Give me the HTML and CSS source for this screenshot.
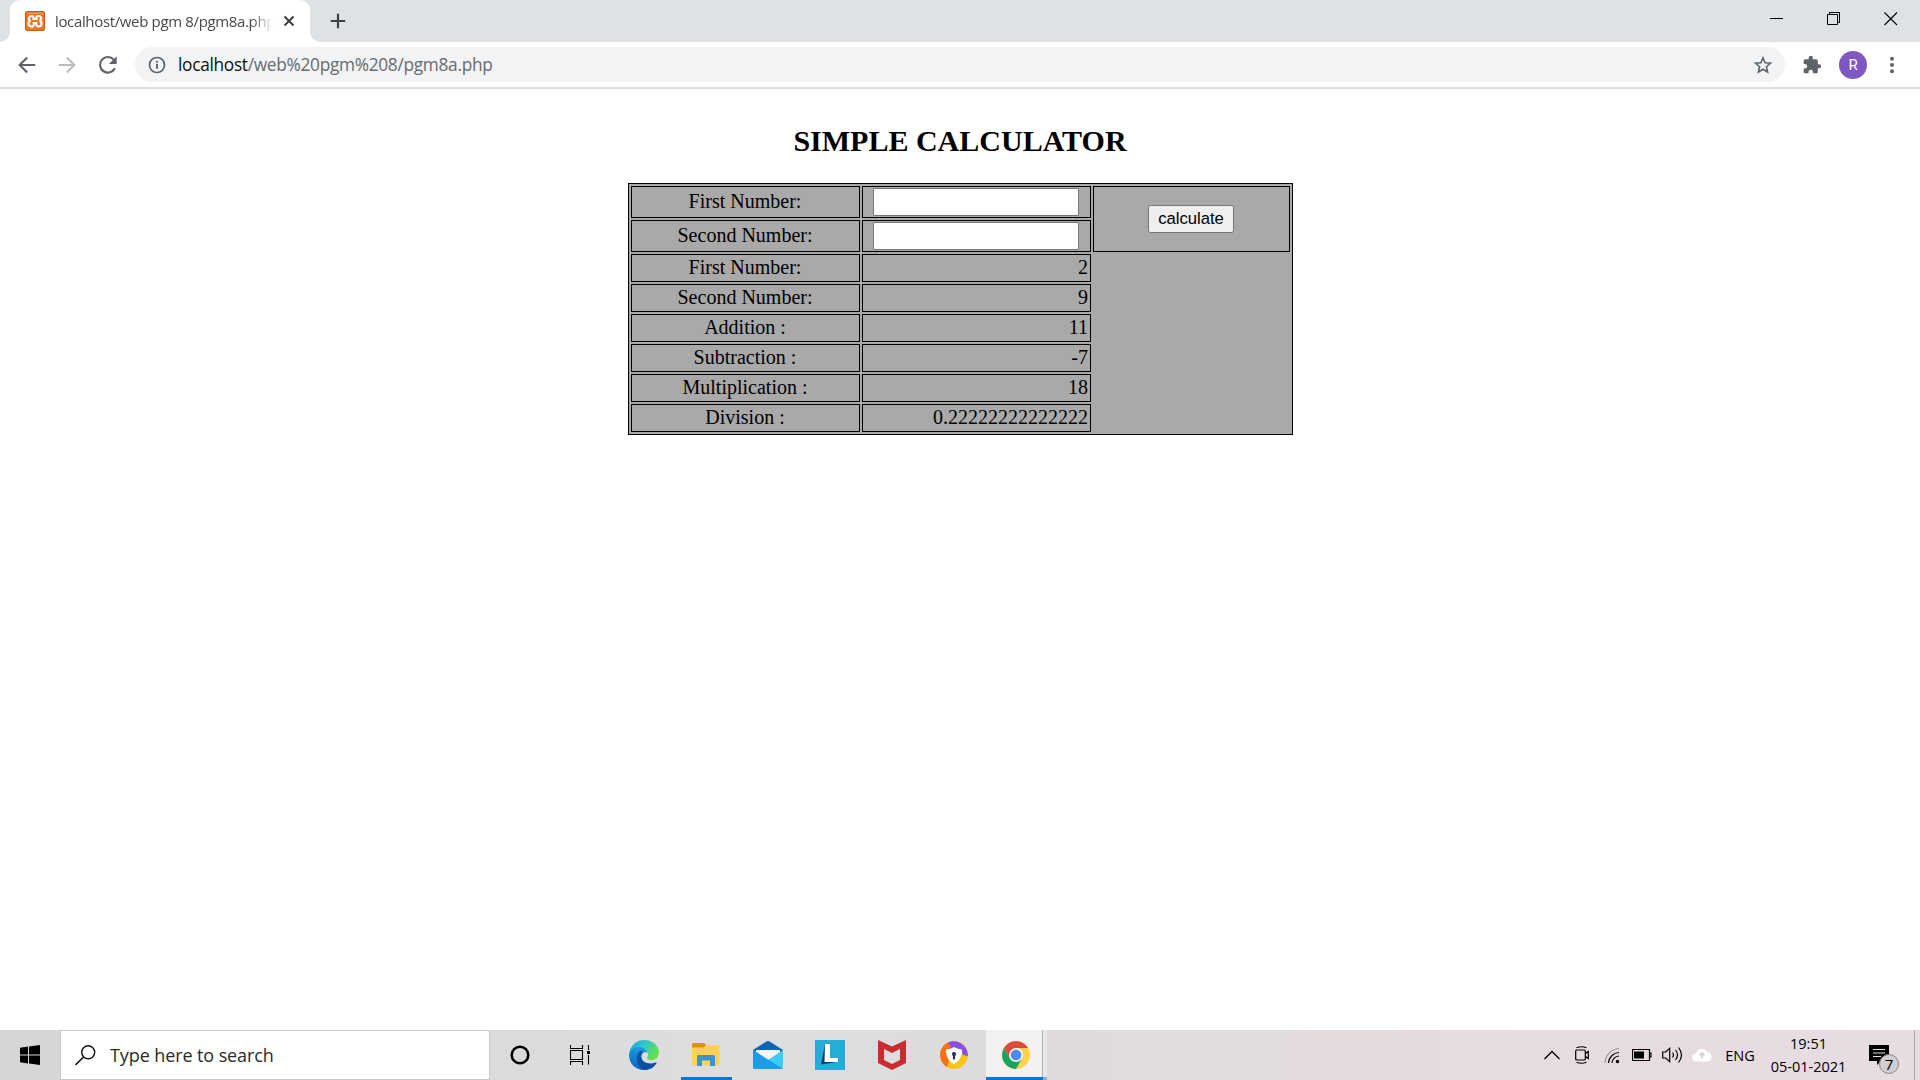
FILE: index.html
```html
<!DOCTYPE html>
<html lang="en">
<head>
<meta charset="utf-8">
<title>localhost/web pgm 8/pgm8a.php</title>
<link rel="stylesheet" href="styles.css">
</head>
<body>
<header class="tabstrip">
  <div class="tab">
    <svg class="favicon" viewBox="0 0 20 20"><rect x=".5" y=".5" width="19" height="19" rx="1.5" fill="#f37623" stroke="#c85a13"/><path d="M2 1.500h16V3H2z" fill="#d39a70"/><path d="M8.500 7Q8.500 5 6.500 5T4 7.300 5.500 10Q3.500 10.500 3.500 12.800T6.200 15.500 8.800 12.800V12H11.200V12.800Q11.200 15.500 13.800 15.500T16.500 12.800 14.500 10Q16 9.500 16 7.300T13.500 5 11.500 7V8H8.500z" fill="none" stroke="#fff" stroke-width="2.200"/></svg>
    <span class="tab-title">localhost/web pgm 8/pgm8a.php</span>
    <svg class="tab-close" viewBox="0 0 12 12"><path d="M1.500 1.500l9 9M10.500 1.500l-9 9" stroke="#3c4043" stroke-width="2"/></svg>
  </div>
  <svg class="new-tab" viewBox="0 0 16 16"><path d="M8 .8v14.400M.8 8h14.400" stroke="#3c4043" stroke-width="2.200"/></svg>
  <div class="window-buttons">
    <span><svg width="14" height="14" viewBox="0 0 14 14"><path d="M0 6.500h13" stroke="#000"/></svg></span>
    <span><svg width="14" height="14" viewBox="0 0 14 14"><path d="M.5 2.500h10v10H.5zM2.500 2V.5h10v10h-2" fill="none" stroke="#000"/></svg></span>
    <span><svg width="14" height="14" viewBox="0 0 14 14"><path d="M.5 .5l12.500 12.500M13 .5L.5 13" stroke="#000" stroke-width="1.100"/></svg></span>
  </div>
</header>
<nav class="toolbar">
  <svg class="nav-icon" viewBox="0 0 24 24"><path d="M21 12H4.500M12.200 3.800L4 12l8.200 8.200" fill="none" stroke="#5f6368" stroke-width="2.300"/></svg>
  <svg class="nav-icon" viewBox="0 0 24 24"><path d="M3 12h16.500M11.800 3.800L20 12l-8.200 8.200" fill="none" stroke="#babcbe" stroke-width="2.300"/></svg>
  <svg class="nav-icon reload" viewBox="0 0 24 24"><path d="M19.500 15.500A8.500 8.500 0 1 1 18.300 6.200" fill="none" stroke="#5f6368" stroke-width="2.400"/><path d="M21.500 2.500v8.500H13z" fill="#5f6368"/></svg>
  <div class="omnibox">
    <svg class="info" viewBox="0 0 18 18"><circle cx="9" cy="9" r="7.500" fill="none" stroke="#5f6368" stroke-width="1.700"/><path d="M9 7.800v5M9 4.700v1.900" stroke="#5f6368" stroke-width="1.900"/></svg>
    <span class="url"><b>localhost</b>/web%20pgm%208/pgm8a.php</span>
    <svg class="star" viewBox="0 0 20 20"><path d="M10 2.700l2.100 5 5.400.5-4.100 3.500 1.200 5.300-4.600-2.800L5.400 17l1.200-5.300-4.100-3.500 5.400-.5z" fill="none" stroke="#5f6368" stroke-width="1.600"/></svg>
  </div>
  <svg class="puzzle" viewBox="0 0 24 24"><path fill="#5f6368" d="M20.500 11H19V7c0-1.100-.9-2-2-2h-4V3.500a2.500 2.500 0 0 0-5 0V5H4c-1.100 0-2 .9-2 2v3.800h1.500a2.700 2.700 0 0 1 0 5.400H2V20c0 1.100.9 2 2 2h3.800v-1.500a2.700 2.700 0 0 1 5.400 0V22H17c1.100 0 2-.9 2-2v-4h1.500a2.500 2.500 0 0 0 0-5z"/></svg>
  <span class="avatar">R</span>
  <svg class="menu" viewBox="0 0 6 18"><g fill="#5f6368"><circle cx="3" cy="2.700" r="2"/><circle cx="3" cy="9" r="2"/><circle cx="3" cy="15.300" r="2"/></g></svg>
</nav>
<main class="page">
  <h2>SIMPLE CALCULATOR</h2>
  <table class="calc">
    <colgroup><col class="c1"><col class="c1"><col class="c3"></colgroup>
    <tr class="entry"><td>First Number:</td><td class="field"><input type="text"></td><td class="field" rowspan="2"><button type="button">calculate</button></td></tr>
    <tr class="entry"><td>Second Number:</td><td class="field"><input type="text"></td></tr>
    <tr><td>First Number:</td><td class="num">2</td></tr>
    <tr><td>Second Number:</td><td class="num">9</td></tr>
    <tr><td>Addition :</td><td class="num">11</td></tr>
    <tr><td>Subtraction :</td><td class="num">-7</td></tr>
    <tr><td>Multiplication :</td><td class="num">18</td></tr>
    <tr><td>Division :</td><td class="num">0.22222222222222</td></tr>
  </table>
</main>
<footer class="taskbar">
  <span class="start"><svg width="20" height="20" viewBox="0 0 20 20"><path d="M0 2.700L8 1.600v7.900H0zM9 1.500L20 0v9.500H9zM0 10.500h8v7.900l-8-1.100zM9 10.500h11V20L9 18.500z"/></svg></span>
  <div class="search">
    <svg width="21" height="21" viewBox="0 0 21 21"><circle cx="13.200" cy="7.300" r="6.500" fill="none" stroke="#111" stroke-width="1.400"/><path d="M8.500 12L.6 19.900" stroke="#111" stroke-width="1.500"/></svg>
    <span class="search-text">Type here to search</span>
  </div>
  <span class="sys"><svg width="20" height="20" viewBox="0 0 20 20"><circle cx="10" cy="10" r="8.300" fill="none" stroke="#000" stroke-width="2.500"/></svg></span>
  <span class="sys"><svg width="20" height="20" viewBox="0 0 20 20"><path d="M.5 0v3.500h12V0M.5 5.500h12v9H.5zM.5 20v-3.500h12V20M18.500 0v5M18.500 10v9.500" fill="none" stroke="#000" stroke-width="1.100"/><path d="M17 6h3v3h-3z"/></svg></span>
  <div class="apps">
    <span class="app"><svg width="30" height="30" viewBox="0 0 30 30">
      <defs><linearGradient id="eg" x1="0" y1="0" x2="1" y2=".5"><stop offset="0" stop-color="#1ba6dd"/><stop offset=".5" stop-color="#32c6c9"/><stop offset="1" stop-color="#66e14c"/></linearGradient><linearGradient id="eb" x1="0" y1="0" x2="0" y2="1"><stop offset="0" stop-color="#1a9be5"/><stop offset="1" stop-color="#0863bd"/></linearGradient></defs>
      <path d="M.5 12C2 4.500 8 0 15 0c9 0 15 6 15 12.500 0 5-3.500 7.500-7.500 7.500-3.500 0-5-1.300-4.200-2.700 2.500-4.500-.8-8-5.500-8C7.500 9.300 2 10 .5 12z" fill="url(#eg)"/>
      <path d="M0 15C0 10 4.500 7 9.500 7c5.500 0 9 3.500 9.200 7-1-2-3-2.500-4.500-1.300-2.500 2-2.200 7 1.300 10 3.500 3 8.500 2.500 12 .3C25 27.500 20 30 15 30 6.500 30 0 23.500 0 15z" fill="url(#eb)"/>
      <path d="M10.300 11.500C5.500 18 8 28 16.500 30c4.500-.3 8.500-3 11-7 .3-.8-.3-1-1-.6-6 2.500-13.500.6-14.500-5.400-.3-2 .4-4 2.200-5.200-1.300-1-3-1-3.900-.3z" fill="#104f9d"/>
    </svg></span>
    <span class="app open"><svg width="28" height="24" viewBox="0 0 28 24"><path d="M0 2Q0 0 1.500 0H12l2 2-2 3H0z" fill="#dc9300"/><path d="M0 4.500h11.500L14 2h12.500q1 0 1 1v18.500q0 1-1 1H1q-1 0-1-1z" fill="#ffd05a"/><path d="M5 23V13.500Q5 12 6.500 12h15q1.500 0 1.500 1.500V23h-5v-5.500h-8V23z" fill="#3d92d3"/></svg></span>
    <span class="app"><svg width="30" height="28" viewBox="0 0 30 28"><path d="M0 9L13.500.5Q15-.3 16.500.5L30 9v4H0z" fill="#0a65b3"/><path d="M3 9h24v9l-12 5-12-5z" fill="#f3f3f3"/><path d="M0 9l15 10L30 9v17.500q0 1.500-1.500 1.500h-27Q0 28 0 26.500z" fill="#3fc9f3"/><path d="M0 9L30 28H1.500Q0 28 0 26.500z" fill="#1c9de6"/></svg></span>
    <span class="app"><svg width="30" height="30" viewBox="0 0 30 30"><path d="M0 0h30v30H0z" fill="#25add9"/><path d="M10 4L6 24.500 22 22l-8-4z" fill="#12396b"/><path d="M10 4h5v14h8v4H9.500z" fill="#fff"/></svg></span>
    <span class="app"><svg width="28" height="30" viewBox="0 0 28 30"><path d="M0 0l14 6.500L28 0v23l-14 7-14-7z" fill="#c82d31"/><path d="M6 9l8 4L22 9v11l-8 4-8-4z" fill="#dfdddf"/></svg></span>
    <span class="app"><svg width="28" height="28" viewBox="0 0 28 28"><circle cx="14" cy="14" r="14" fill="#f6c51b"/><path d="M8 1.500C16-2.500 28 3 28 15l-5-1C21 6 15 6 8 8z" fill="#8350ed"/><path d="M8 1.400A14 14 0 0 0 7 26L9 19 6 9l5-3z" fill="#f9701a"/><path d="M14 6q4 2.500 8 2.500C22 16 19 20.500 14 23 9 20.500 6 16 6 8.500q4 0 8-2.500z" fill="#fff"/><circle cx="14" cy="13" r="2.100" fill="#28354f"/><path d="M12.900 13h2.200v5.500h-2.200z" fill="#28354f"/></svg></span>
    <span class="app active"><svg width="28" height="28" viewBox="0 0 28 28"><circle cx="14" cy="14" r="14" fill="#ffd24d"/><path d="M1.900 7A14 14 0 0 1 26.100 7H14L8 17.500z" fill="#dc4a3e"/><path d="M1.900 7A14 14 0 0 0 14 28L20 17.500H8z" fill="#1aa260"/><circle cx="14" cy="14" r="7" fill="#f1f1f1"/><circle cx="14" cy="14" r="5.300" fill="#4b8bf4"/></svg></span>
  </div>
  <div class="tray">
    <span class="slot"><svg width="16" height="10" viewBox="0 0 16 10"><path d="M.5 9L8 1.500 15.500 9" fill="none" stroke="#000" stroke-width="1.300"/></svg></span>
    <span class="slot"><svg width="14" height="18" viewBox="0 0 14 18"><path d="M.7 5q0-1 1-1h7.600q1 0 1 1v8q0 1-1 1H1.700q-1 0-1-1zM10.500 7.500L13.300 5.500v7L10.500 10.500M1.500 1.800Q6.500-.3 11.500 1.800M1.500 16.200q5 2.100 10 0" fill="none" stroke="#000" stroke-width="1.200"/></svg></span>
    <span class="slot"><svg width="16" height="17" viewBox="0 0 16 17"><g fill="none" stroke-width="1.200"><path d="M1 16A15 15 0 0 1 15 1.500" stroke="#999"/><path d="M4.500 16A11 11 0 0 1 15 5.500M8 16A7.500 7.500 0 0 1 15 9" stroke="#000"/></g><circle cx="13.500" cy="14.500" r="1.700"/></svg></span>
    <span class="slot"><svg width="20" height="12" viewBox="0 0 20 12"><path d="M.5 .5h17v11H.5zM18 4h1v4h-1" fill="none" stroke="#000" stroke-width="1.200"/><path d="M2 2.500h10v7H2z"/></svg></span>
    <span class="slot"><svg width="21" height="18" viewBox="0 0 21 18"><path d="M.7 6v6h3l4 3.700V2.300L3.700 6zM10.500 6.500q2 2.500 0 5M13.500 4q4 5 0 10M16.500 1.500q6 7.500 0 15" fill="none" stroke="#000" stroke-width="1.200"/></svg></span>
    <span class="slot"><svg width="20" height="14" viewBox="0 0 20 14"><path d="M4.500 13.500a4 4 0 0 1-.6-8A6 6 0 0 1 15 4a4.800 4.800 0 0 1 .5 9.500z" fill="#fff"/><path d="M10 3.500L6.500 7.500H9v3h2v-3h2.500z" fill="#d8d0d3"/></svg></span>
    <span class="lang">ENG</span>
    <div class="clock"><span>19:51</span><span>05-01-2021</span></div>
    <div class="notes">
      <svg width="20" height="20" viewBox="0 0 20 20"><path d="M0 0h20v16h-8l-4 4v-4H0z"/><path d="M4 4.500h12M4 8h12M4 11.500h8" stroke="#e5dbe0" stroke-width="1.200"/></svg>
      <span class="badge">7</span>
    </div>
    <span class="peek"></span>
  </div>
</footer>
</body>
</html>
```
FILE: styles.css
```css
* { box-sizing: border-box; }
body {
  margin: 0;
  height: 1080px;
  overflow: hidden;
  display: flex;
  flex-direction: column;
  background: #fff;
  color: #000;
  font-family: "Open Sans", "Noto Sans", sans-serif;
}
svg { display: block; flex: none; }

.tabstrip { height: 42px; flex: none; background: #dee1e6; display: flex; align-items: center; padding-left: 10px; }
.tab {
  position: relative;
  width: 300px; height: 42px;
  background: #fff;
  border-radius: 10px 10px 0 0;
  display: flex; align-items: center;
  padding-left: 15px;
}
.tab::before, .tab::after { content: ""; position: absolute; bottom: 0; width: 10px; height: 10px; }
.tab::before { left: -10px; background: radial-gradient(circle at 0 0, #dee1e6 9.5px, #fff 10px); }
.tab::after { right: -10px; background: radial-gradient(circle at 100% 0, #dee1e6 9.5px, #fff 10px); }
.favicon { width: 20px; height: 20px; }
.tab-title {
  width: 218px; margin: 0 10px;
  overflow: hidden; white-space: nowrap;
  font-size: 15px; line-height: 22px; letter-spacing: -.35px; color: #45494d;
  -webkit-mask-image: linear-gradient(90deg, #000 90%, transparent);
  mask-image: linear-gradient(90deg, #000 90%, transparent);
}
.tab-close { width: 12px; height: 12px; }
.new-tab { width: 16px; height: 16px; margin-left: 20px; }
.window-buttons { margin-left: auto; display: flex; padding-right: 1px; }
.window-buttons span { width: 57px; height: 42px; display: flex; align-items: center; justify-content: center; padding-bottom: 5px; }

.toolbar { height: 47px; flex: none; border-bottom: 2px solid #dadce0; display: flex; align-items: center; padding-left: 16px; }
.nav-icon { width: 22px; height: 22px; margin-right: 18px; }
.reload { margin: 0 16px 0 1px; }
.omnibox { width: 1650px; height: 35px; border-radius: 18px; background: #f1f3f4; display: flex; align-items: center; padding: 0 12px 0 13px; }
.info { width: 18px; height: 18px; }
.url { margin-left: 12px; font-size: 17.3px; letter-spacing: -.3px; color: #686b70; white-space: nowrap; }
.url b { font-weight: 400; color: #111; }
.star { width: 20px; height: 20px; margin-left: auto; }
.puzzle { width: 20px; height: 20px; margin-left: 17px; }
.avatar { width: 28px; height: 28px; margin-left: 17px; border-radius: 50%; background: #7e57c2; color: #fff; font: 15px/28px Roboto, sans-serif; text-align: center; }
.menu { width: 6px; height: 18px; margin-left: 22px; }

.page { flex: 1; display: flex; flex-direction: column; align-items: center; font-family: "Liberation Serif", serif; padding-top: 35px; }
.page h2 { margin: 0; font-size: 30px; line-height: 34px; font-weight: 700; }
.calc { margin: 25px 0 0 1px; width: 665px; table-layout: fixed; border: 1px solid #000; border-spacing: 2px; background: #a9a9a9; font-size: 20px; line-height: 22px; }
.c1 { width: 229px; }
.c3 { width: 197px; }
.calc td { height: 28px; padding: 0 2px 2px 1px; border: 1px solid #000; text-align: center; }
.calc .entry td { height: 32px; }
.calc .entry .field { padding: 1px 2px 1px 1px; }
.calc .num { text-align: right; }
.calc input { display: block; margin: 0 auto; width: 206px; height: 28px; border: 1px solid #767676; border-radius: 1px; background: #fff; }
.calc button { display: block; margin: 0 auto; width: 86px; height: 28px; padding: 0; border: 1px solid #767676; border-radius: 2.5px; background: #efefef; font: 16.67px/24px "Liberation Sans", sans-serif; color: #000; }

.taskbar { height: 50px; flex: none; display: flex; background: linear-gradient(90deg, #d6d6d6, #dddde0 35%, #dfdbde 58%, #e5dbe0 75%, #e6dce1); }
.start { width: 60px; display: flex; align-items: center; justify-content: center; }
.search { width: 430px; background: #fff; border: 1px solid #c8c8c8; display: flex; align-items: center; padding-left: 14px; }
.search-text { margin-left: 14px; font-size: 18px; letter-spacing: -.1px; color: #2b2b2b; white-space: nowrap; }
.sys { width: 60px; display: flex; align-items: center; justify-content: center; }
.apps { display: flex; margin-left: 3px; }
.app { width: 62px; display: flex; align-items: center; justify-content: center; }
.open { background: linear-gradient(#0078d7, #0078d7) 6px 100% / 51px 3px no-repeat; }
.active {
  background:
    linear-gradient(90deg, #0078d7 57px, #7ab4e6 57px) 1px 100% / 61px 3px no-repeat,
    linear-gradient(90deg, transparent 1px, #f1f1f1 1px, #f1f1f1 57px, #b7b5b7 57px, #b7b5b7 58px, #eae7e9 58px);
}
.tray { margin-left: auto; display: flex; }
.slot { width: 30px; display: flex; align-items: center; justify-content: center; }
.lang { width: 46px; text-align: center; line-height: 51px; font-size: 14.5px; }
.clock { width: 90px; display: flex; flex-direction: column; align-items: center; font-size: 14.5px; line-height: 23px; padding: 2px 0 0 1px; white-space: nowrap; }
.notes { position: relative; width: 61px; padding: 15px 0 0 16px; }
.badge { position: absolute; left: 26px; top: 24px; width: 20px; height: 20px; border: 1px solid #888; border-radius: 50%; background: #d0ced0; font-size: 15px; line-height: 18px; text-align: center; }
.peek { width: 6px; border-left: 1px solid #aaa4a8; }
```
